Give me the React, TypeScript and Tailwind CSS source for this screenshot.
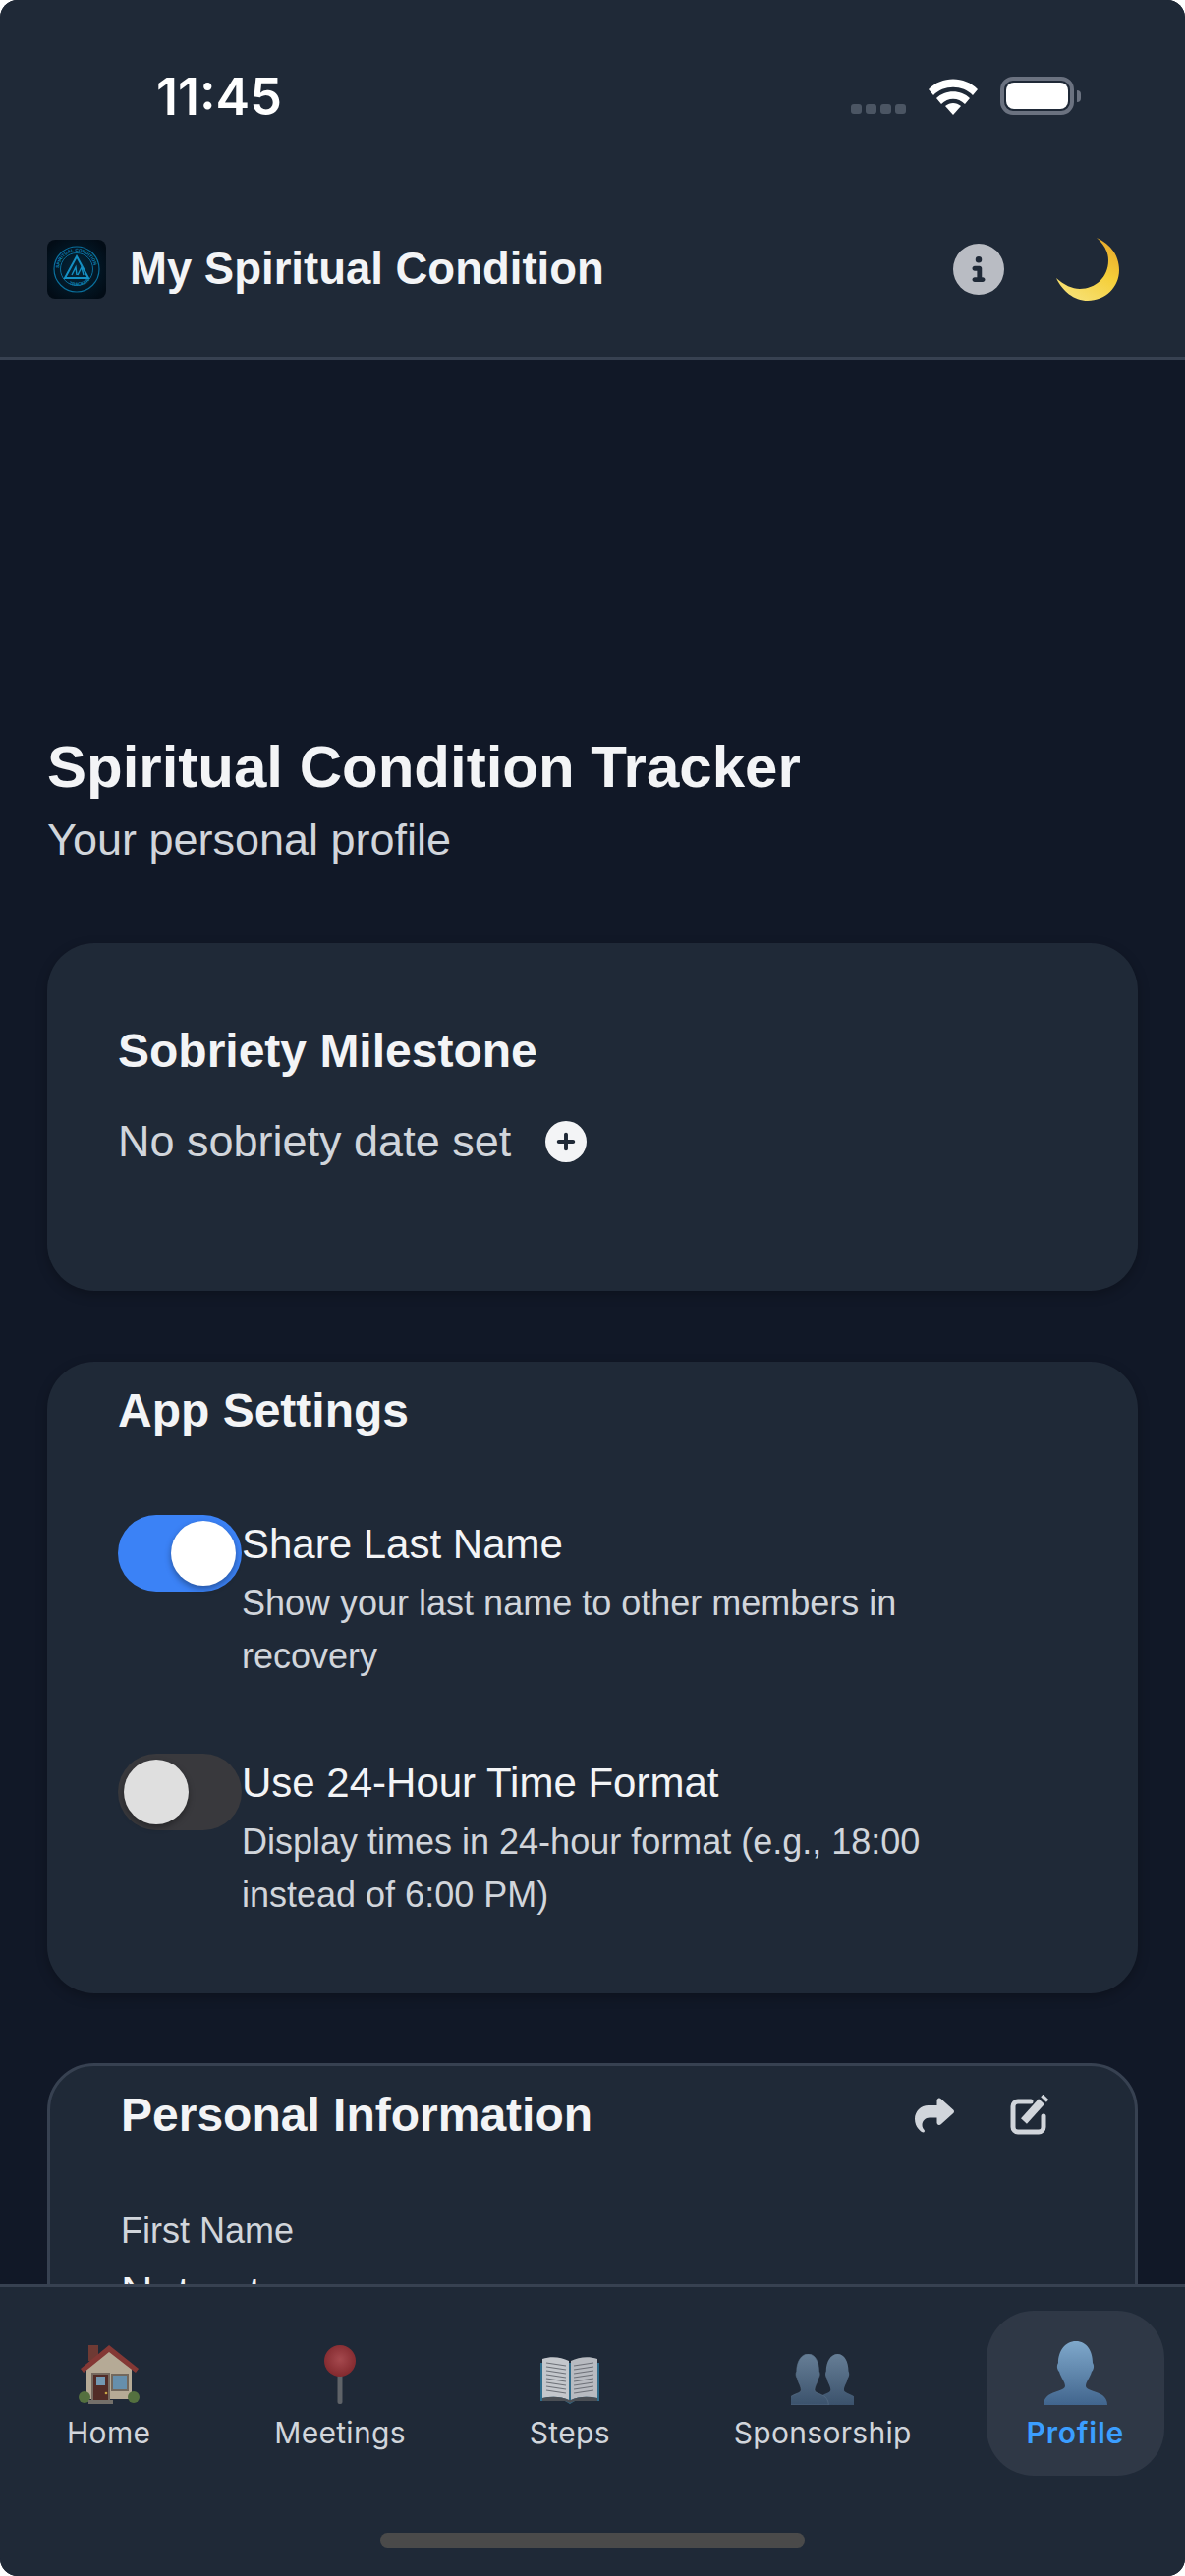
import React from "react";
import { FaCircleInfo, FaCirclePlus, FaShare } from "react-icons/fa6";

const BUST = "M33 0C44 0 50 10 50 22C52 25 51 29 49 31C47 38 43 41 43 46C43 50 55 51 60 55C64 58 65 62 65 65L0 65C0 62 1 58 5 55C10 51 22 50 22 46C22 41 18 38 16 31C14 29 13 25 15 22C15 10 22 0 33 0Z";

function Logo() {
  return (
    <svg viewBox="0 0 60 60" className="w-[60px] h-[60px] rounded-lg shrink-0">
      <defs>
        <radialGradient id="lg" cx="50%" cy="50%" r="60%">
          <stop offset="0%" stopColor="#04263a" />
          <stop offset="100%" stopColor="#020c16" />
        </radialGradient>
        <path id="arcTop" d="M12 30a18 18 0 0 1 36 0" />
        <path id="arcBot" d="M11 33a20 20 0 0 0 38 0" />
      </defs>
      <rect width="60" height="60" fill="url(#lg)" />
      <circle cx="30" cy="30" r="23" fill="none" stroke="#0a6f9c" strokeWidth="1.2" />
      <circle cx="30" cy="30" r="16.5" fill="none" stroke="#0a6f9c" strokeWidth="1" />
      <text fontSize="4.6" fontWeight="700" fill="#0f86b8" fontFamily="'Liberation Sans', sans-serif">
        <textPath href="#arcTop" startOffset="1">SPIRITUAL CONDITION</textPath>
      </text>
      <text fontSize="4.6" fontWeight="700" fill="#0f86b8" fontFamily="'Liberation Sans', sans-serif">
        <textPath href="#arcBot" startOffset="17">TRACKER</textPath>
      </text>
      <path d="M30 17L42 39H18Z" fill="none" stroke="#1590c4" strokeWidth="2" />
      <path d="M25 36L29 28L30 36M31 36L35 28L37 36" fill="none" stroke="#1590c4" strokeWidth="1.4" />
    </svg>
  );
}

function Moon() {
  return (
    <svg viewBox="0 0 64 64" className="w-[64px] h-[64px]">
      <defs>
        <linearGradient id="moon" x1="0.2" y1="1" x2="0.8" y2="0">
          <stop offset="0%" stopColor="#f7e27a" />
          <stop offset="55%" stopColor="#f5cf3a" />
          <stop offset="100%" stopColor="#e8a92a" />
        </linearGradient>
      </defs>
      <path d="M41 0C55 6 64 18 64 33C64 50 50 64 32 64C18 64 6 54 0 41C8 48 16 52 24 52C40 52 53 40 53 23C53 14 48 6 41 0Z" fill="url(#moon)" />
    </svg>
  );
}

function House() {
  return (
    <svg viewBox="0 0 62 62" className="w-[62px] h-[62px]">
      <rect x="10" y="1" width="10" height="16" fill="#6f3a34" />
      <path d="M8 24L31 4L54 24V56H8Z" fill="#b5aa96" />
      <path d="M2 25L31 1L61 25L58 29L31 8L5 29Z" fill="#843835" />
      <circle cx="6" cy="54" r="6" fill="#54703f" />
      <circle cx="56" cy="54" r="6" fill="#54703f" />
      <rect x="14" y="30" width="17" height="28" fill="#522c27" stroke="#75695f" strokeWidth="2" />
      <rect x="18" y="33" width="9" height="9" fill="#7398b2" />
      <circle cx="28" cy="50" r="1.3" fill="#c8a544" />
      <rect x="34" y="31" width="16" height="16" fill="#668fac" stroke="#72685d" strokeWidth="2" />
      <rect x="10" y="57" width="25" height="4" fill="#74706a" />
    </svg>
  );
}

function Pin() {
  return (
    <svg viewBox="0 0 34 62" className="w-[34px] h-[62px]">
      <defs>
        <radialGradient id="pin" cx="50%" cy="45%" r="55%">
          <stop offset="0%" stopColor="#a5494e" />
          <stop offset="100%" stopColor="#82292e" />
        </radialGradient>
      </defs>
      <rect x="14.5" y="30" width="5" height="31" rx="2" fill="#5f6368" />
      <circle cx="17" cy="17" r="16" fill="url(#pin)" />
    </svg>
  );
}

function Book() {
  const lines = [10, 14, 18, 22, 26, 30, 34, 38];
  return (
    <svg viewBox="0 0 62 50" className="w-[62px] h-[50px]">
      <path d="M1 7H61V46H36L31 49L26 46H1Z" fill="#2f6d8c" />
      <path d="M3 43V3C12 0 22 1 30 5V45C22 41 12 41 3 43Z" fill="#c4c7cc" />
      <path d="M59 43V3C50 0 40 1 32 5V45C40 41 50 41 59 43Z" fill="#b8bbc1" />
      <path d="M3 43C12 41 22 41 30 45H32C40 41 50 41 59 43V46H36L31 48L26 46H3Z" fill="#4b4f55" />
      {lines.map((y) => (
        <g key={y} stroke="#6d7178" strokeWidth="1.2">
          <line x1="7" y1={y - 3} x2="27" y2={y} />
          <line x1="35" y1={y} x2="55" y2={y - 3} />
        </g>
      ))}
    </svg>
  );
}

function Busts() {
  return (
    <svg viewBox="0 0 64 52" className="w-[64px] h-[52px]">
      <defs>
        <linearGradient id="b2" x1="0" y1="0" x2="0" y2="1">
          <stop offset="0%" stopColor="#667e96" />
          <stop offset="100%" stopColor="#3b526c" />
        </linearGradient>
      </defs>
      <g transform="translate(26 0) scale(0.65 0.8)"><path d={BUST} fill="url(#b2)" /></g>
      <g transform="translate(-4 0) scale(0.65 0.8)"><path d={BUST} fill="url(#b2)" stroke="#5a7088" strokeWidth="0.8" /></g>
    </svg>
  );
}

function Bust() {
  return (
    <svg viewBox="0 0 65 65" className="w-[65px] h-[65px]">
      <defs>
        <linearGradient id="b1" x1="0" y1="0" x2="0" y2="1">
          <stop offset="0%" stopColor="#7fa8cb" />
          <stop offset="100%" stopColor="#41658d" />
        </linearGradient>
      </defs>
      <path d={BUST} fill="url(#b1)" />
    </svg>
  );
}

function EditIcon() {
  return (
    <svg viewBox="0 0 42 42" className="w-[42px] h-[42px] text-[#d1d5db]" fill="none" stroke="currentColor">
      <path d="M22 7H9a5 5 0 0 0-5 5v21a5 5 0 0 0 5 5h21a5 5 0 0 0 5-5V22" strokeWidth="5" strokeLinecap="round" />
      <path d="M15 27L33 7" strokeWidth="8" />
      <path d="M35 5L37.5 2.5" strokeWidth="8" />
    </svg>
  );
}

function StatusIcons() {
  return (
    <div className="flex items-end">
      <div className="flex gap-[4px] mb-[1px]">
        {[0, 1, 2, 3].map((i) => (
          <div key={i} className="w-[11px] h-[10px] rounded-[3px] bg-[#4b5563]" />
        ))}
      </div>
      <svg viewBox="0 0 52 38" className="w-[52px] h-[38px] ml-[22px]">
        <path d="M1 12C14 -2 38 -2 51 12L46 18C36 7 16 7 6 18Z" fill="#fff" />
        <path d="M9 21C18 12 34 12 43 21L38 27C31 20 21 20 14 27Z" fill="#fff" />
        <path d="M18 29C23 25 29 25 34 29L26 38Z" fill="#fff" />
      </svg>
      <div className="ml-[22px] w-[75px] h-[39px] rounded-[13px] border-[4px] border-[#6b7280] p-[2px] flex">
        <div className="flex-1 bg-white rounded-[8px]" />
      </div>
      <div className="w-[4px] h-[12px] rounded-r-[4px] bg-[#6b7280] mb-[13px] ml-[3px]" />
    </div>
  );
}

function Toggle({ on }: { on: boolean }) {
  return (
    <div className={`w-[126px] h-[78px] shrink-0 rounded-full p-[6px] flex ${on ? "bg-[#3b82f6] justify-end" : "bg-[#39393d] justify-start"}`}>
      <div className={`w-[66px] h-[66px] rounded-full shadow-[0_3px_6px_rgba(0,0,0,0.35)] ${on ? "bg-white" : "bg-[#dfdfdf]"}`} />
    </div>
  );
}

function Setting({ on, title, sub }: { on: boolean; title: string; sub: string }) {
  return (
    <div className="flex items-start">
      <Toggle on={on} />
      <div className="w-[740px]">
        <div className="text-[42px] leading-[60px] text-[#f3f4f6]">{title}</div>
        <div className="text-[36px] leading-[54px] text-[#d1d5db] mt-[3px]">{sub}</div>
      </div>
    </div>
  );
}

function NavItem({ label, active, children }: { label: string; active?: boolean; children: React.ReactNode }) {
  return (
    <div className={`h-[168px] flex flex-col items-center rounded-[48px] ${active ? "bg-[#2f3846] px-[41px]" : "px-[40px]"}`}>
      <div className="h-[96px] pt-[30px] flex items-end justify-center">{children}</div>
      <div
        className={`mt-[10px] text-[30px] leading-[36px] whitespace-nowrap ${active ? "tracking-[0.75px] font-semibold text-[#3b9eff]" : "tracking-[0.3px] text-[#d1d5db]"}`}
        style={{ fontFamily: "Inter, sans-serif" }}
      >
        {label}
      </div>
    </div>
  );
}

export default function App() {
  return (
    <div className="bg-white w-[1206px] h-[2622px]">
      <div
        className="w-full h-full rounded-[18px] overflow-hidden flex flex-col bg-[#111827]"
        style={{ fontFamily: "'Liberation Sans', Arial, sans-serif" }}
      >
        <header className="h-[366px] shrink-0 bg-[#1f2937] border-b-[3px] border-[#374151]">
          <div className="flex justify-between items-end h-[117px] pl-[159px] pr-[106px]">
            <div className="text-[52px] leading-[60px] font-semibold text-white mb-[-12px]" style={{ fontFamily: "Inter, sans-serif" }}>11:45</div>
            <StatusIcons />
          </div>
          <div className="flex items-center h-[64px] mt-[125px] pl-[48px] pr-[67px]">
            <Logo />
            <div className="ml-[24px] text-[45.5px] font-bold leading-[60px] text-[#f3f4f6]">My Spiritual Condition</div>
            <FaCircleInfo className="ml-auto text-[#b9bcc3] w-[52px] h-[52px]" />
            <div className="ml-[53px]"><Moon /></div>
          </div>
        </header>

        <main className="flex-1 min-h-0 overflow-hidden px-[48px] pt-[379px]">
          <h1 className="text-[60px] font-bold leading-[72px] text-[#f3f4f6]">Spiritual Condition Tracker</h1>
          <p className="text-[45px] leading-[60px] text-[#d1d5db] mt-[8px]">Your personal profile</p>

          <section className="mt-[75px] h-[354px] rounded-[48px] bg-[#1f2937] shadow-[0_4px_12px_rgba(0,0,0,0.25)] px-[72px] pt-[80px]">
            <h2 className="text-[48px] font-bold leading-[60px] text-[#f3f4f6]">Sobriety Milestone</h2>
            <div className="flex items-center mt-[32px]">
              <span className="text-[45px] leading-[60px] text-[#d1d5db]">No sobriety date set</span>
              <FaCirclePlus className="ml-[35px] w-[42px] h-[42px] text-[#f3f4f6]" />
            </div>
          </section>

          <section className="mt-[72px] rounded-[48px] bg-[#1f2937] shadow-[0_4px_12px_rgba(0,0,0,0.25)] px-[72px] pt-[20px] pb-[73px]">
            <h2 className="text-[48px] font-bold leading-[60px] text-[#f3f4f6]">App Settings</h2>
            <div className="mt-[76px] flex flex-col gap-[72px]">
              <Setting on title="Share Last Name" sub="Show your last name to other members in recovery" />
              <Setting on={false} title="Use 24-Hour Time Format" sub="Display times in 24-hour format (e.g., 18:00 instead of 6:00 PM)" />
            </div>
          </section>

          <section className="mt-[71px] rounded-[48px] bg-[#1f2937] border-[3px] border-[#374151] px-[72px] pt-[20px] pb-[60px]">
            <div className="flex items-center justify-between">
              <h2 className="text-[48px] font-bold leading-[60px] text-[#f3f4f6]">Personal Information</h2>
              <div className="flex items-center gap-[56px] pr-[14px]">
                <FaShare className="w-[40px] h-[40px] text-[#d1d5db]" />
                <EditIcon />
              </div>
            </div>
            <div className="mt-[64px] text-[36px] leading-[48px] text-[#d1d5db]">First Name</div>
            <div className="mt-[12px] text-[45px] leading-[54px] text-[#f3f4f6]">Not set</div>
          </section>
        </main>

        <nav className="h-[297px] shrink-0 bg-[#1f2937] border-t-[3px] border-[#374151] relative">
          <div className="flex justify-between pl-[28px] pr-[21px] pt-[24px]">
            <div className="flex gap-[46px]">
              <NavItem label="Home"><House /></NavItem>
              <NavItem label="Meetings"><Pin /></NavItem>
              <NavItem label="Steps"><Book /></NavItem>
              <NavItem label="Sponsorship"><Busts /></NavItem>
            </div>
            <NavItem label="Profile" active><Bust /></NavItem>
          </div>
          <div className="absolute left-[387px] top-[250px] w-[432px] h-[15px] rounded-full bg-[#4a4a4a]" />
        </nav>
      </div>
    </div>
  );
}
